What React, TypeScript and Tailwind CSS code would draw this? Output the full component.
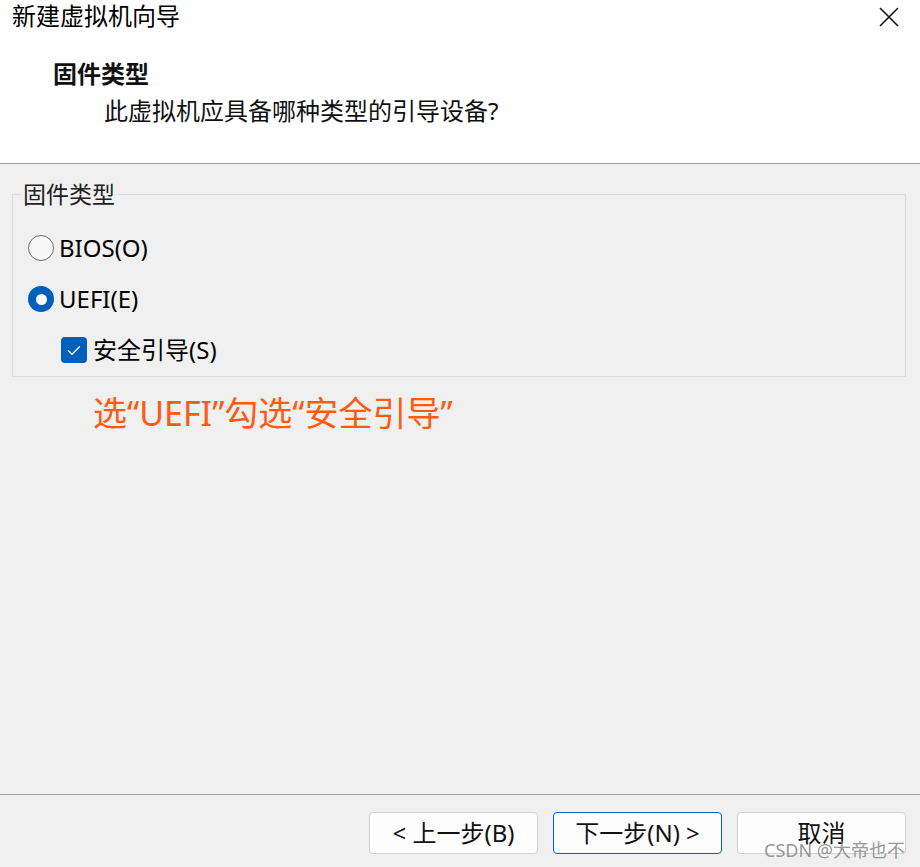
import React from "react";

const FONT = "font-['Noto_Sans','Noto_Sans_CJK_SC',sans-serif]";

function Radio({ checked }: { checked: boolean }) {
  if (checked) {
    return (
      <span className="flex h-[26px] w-[26px] items-center justify-center rounded-full bg-[#005fb8]">
        <span className="h-[11px] w-[11px] rounded-full bg-white" />
      </span>
    );
  }
  return <span className="block h-[26px] w-[26px] rounded-full border-[1.5px] border-[#6e6e6e] bg-[#f7f7f7]" />;
}

function Checkbox() {
  return (
    <span className="flex h-[26px] w-[26px] items-center justify-center rounded-[4px] bg-[#005fb8]">
      <svg width="14" height="11" viewBox="0 0 14 11" fill="none">
        <path d="M1.5 5.8 L5 9.2 L12.5 1.8" stroke="white" strokeWidth="1.4" strokeLinecap="round" strokeLinejoin="round" />
      </svg>
    </span>
  );
}

function Btn({ children, primary }: { children: React.ReactNode; primary?: boolean }) {
  return (
    <button
      className={
        "flex h-[42px] w-[169px] items-center justify-center rounded-[4px] border bg-[#fdfdfd] text-[24px] leading-none text-[#111] " +
        (primary ? "border-[#0067c0]" : "border-[#d2d2d2]")
      }
    >
      {children}
    </button>
  );
}

export default function App() {
  return (
    <div className={`relative flex h-[867px] w-[920px] flex-col overflow-hidden bg-[#f0f0f0] ${FONT} text-black`}>
      {/* Header */}
      <div className="h-[164px] shrink-0 border-b border-[#a0a0a0] bg-white">
        <div className="flex items-start justify-between">
          <div className="pl-[12px] text-[24px] leading-[32px]">新建虚拟机向导</div>
          <svg className="mr-[21px] mt-[7px]" width="20" height="20" viewBox="0 0 20 20">
            <path d="M1 1 L19 19 M19 1 L1 19" stroke="#111" strokeWidth="1.6" />
          </svg>
        </div>
        <div className="mt-[26px] pl-[53px] text-[24px] font-bold leading-[32px] text-[#111]">固件类型</div>
        <div className="mt-[5px] pl-[104px] text-[24px] leading-[32px] text-[#111]">此虚拟机应具备哪种类型的引导设备?</div>
      </div>

      {/* Body */}
      <div className="flex flex-1 flex-col">
        <fieldset className="ml-[12px] mr-[14px] mt-[15px] border border-[#dcdcdc] pb-[13px] pl-[15px] pt-[26px]">
          <legend className="-ml-[7px] px-[2px] text-[23px] leading-[30px] text-[#222]">固件类型</legend>
          <div className="flex flex-col gap-[25px]">
            <div className="flex h-[26px] items-center gap-[5px]">
              <Radio checked={false} />
              <span className="text-[24px] leading-none">BIOS(O)</span>
            </div>
            <div className="flex h-[26px] items-center gap-[5px]">
              <Radio checked />
              <span className="text-[24px] leading-none">UEFI(E)</span>
            </div>
            <div className="ml-[33px] flex h-[26px] items-center gap-[6px]">
              <Checkbox />
              <span className="text-[24px] leading-none">安全引导(S)</span>
            </div>
          </div>
        </fieldset>
        <div className="ml-[93px] mt-[14px] text-[34px] leading-[44px] text-[#ff5a12]">选“UEFI”勾选“安全引导”</div>
      </div>

      {/* Footer */}
      <div className="flex h-[73px] shrink-0 items-start justify-end gap-[15px] border-t border-[#a0a0a0] pr-[14px] pt-[17px]">
        <Btn>&lt; 上一步(B)</Btn>
        <Btn primary>下一步(N) &gt;</Btn>
        <Btn>取消</Btn>
      </div>

      <div className="pointer-events-none absolute bottom-[8px] right-[15px] text-[18px] leading-none text-[#8a8a8a]/90">
        CSDN @大帝也不
      </div>
    </div>
  );
}
